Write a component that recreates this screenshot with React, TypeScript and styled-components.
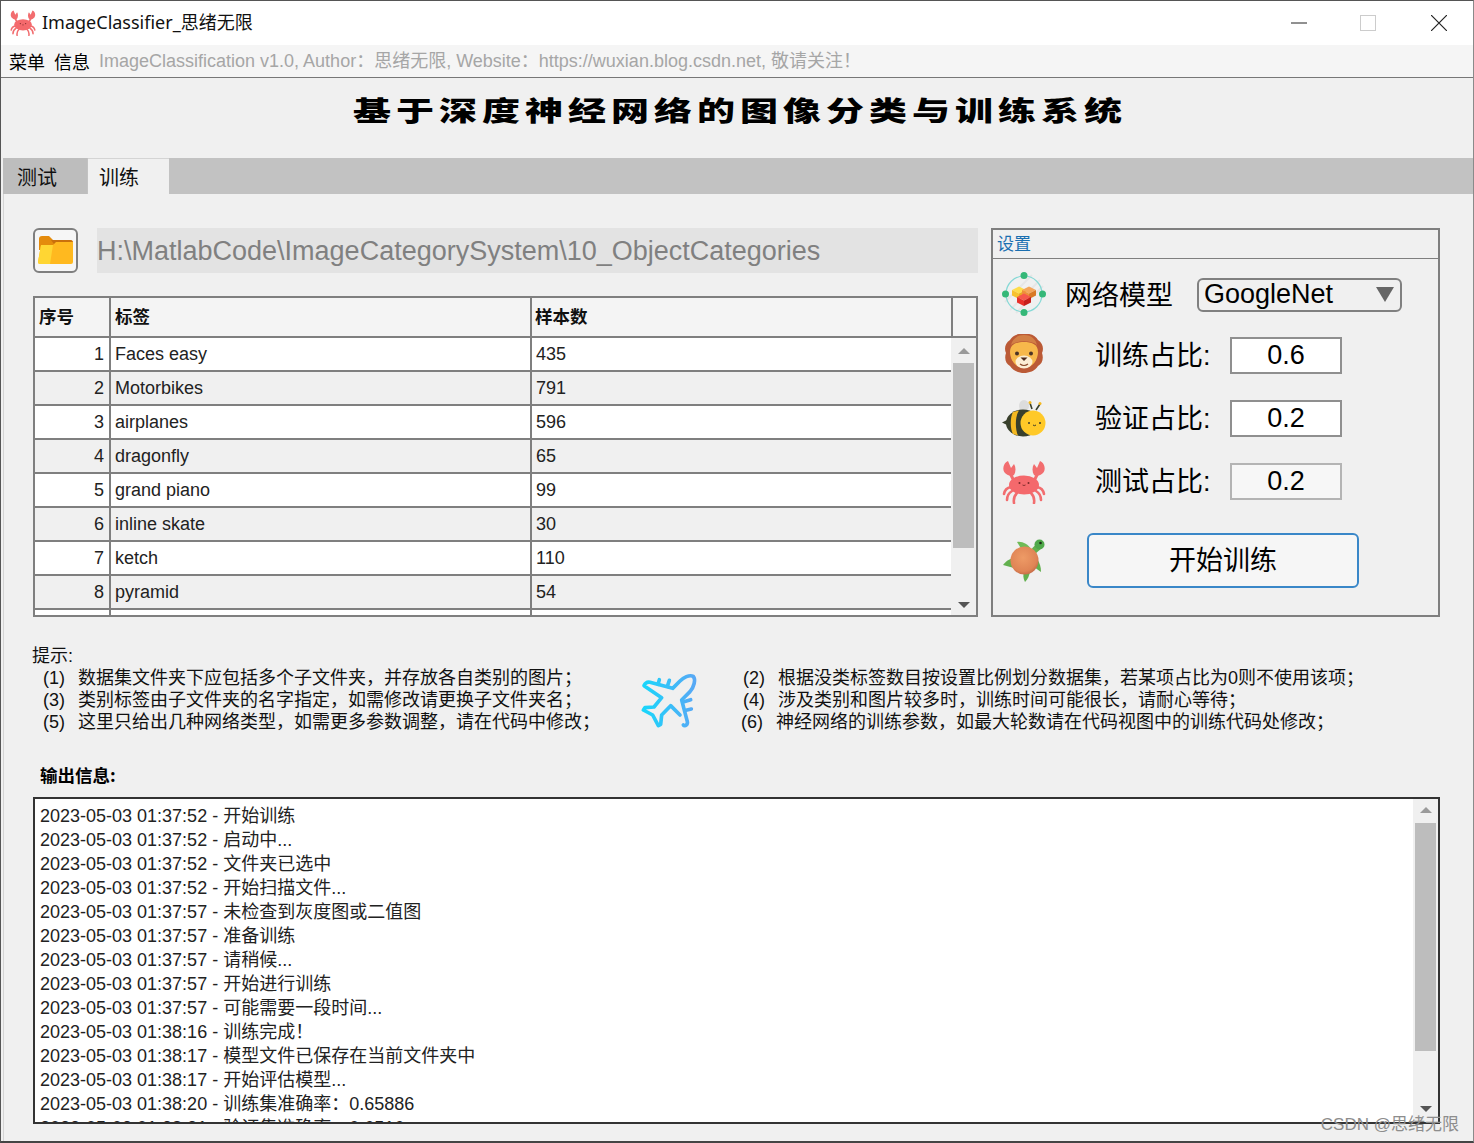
import React from 'react';
import styled, { createGlobalStyle } from 'styled-components';

const CJK = '"Noto Sans CJK SC", sans-serif';
const MIX = `"Liberation Sans", ${CJK}`;

const Global = createGlobalStyle`
  html, body { margin: 0; padding: 0; background: #f0f0f0; }
  * { box-sizing: border-box; }
`;

const Win = styled.div`
  position: relative;
  width: 1474px;
  height: 1143px;
  overflow: hidden;
  background: #f0f0f0;
  border-top: 1px solid #555;
  border-left: 1px solid #555;
  border-right: 1px solid #8a8a8a;
  border-bottom: 2px solid #444;
  font-family: ${MIX};
  color: #111;
`;
const TitleBar = styled.div`
  height: 44px;
  background: #fff;
  display: flex;
  align-items: center;
  padding-left: 9px;
`;
const TitleText = styled.div`
  margin-left: 6px;
  padding-bottom: 4px;
  font-family: "Noto Sans", ${CJK};
  font-size: 18px;
  color: #111;
`;
const Controls = styled.div`
  margin-left: auto;
  display: flex;
  height: 100%;
`;
const Ctl = styled.div`
  width: ${p => p.$w}px;
  display: flex;
  align-items: center;
  justify-content: center;
`;
const MenuBar = styled.div`
  height: 33px;
  background: #f5f5f5;
  border-bottom: 1px solid #777;
  display: flex;
  align-items: center;
  padding-left: 8px;
  font-size: 18px;
  line-height: 32px;
`;
const MenuItem = styled.span`
  margin-right: 9px;
  font-family: ${CJK};
  color: #000;
`;
const MenuInfo = styled.span`
  color: #a6a6a6;
`;
const Heading = styled.div`
  height: 80px;
  display: flex;
  align-items: center;
  justify-content: center;
  padding: 0 0 18px 6px;
`;
const HeadingText = styled.div`
  font-family: ${CJK};
  font-weight: 900;
  font-size: 38px;
  line-height: 40px;
  letter-spacing: 5px;
  color: #000;
  transform: scaleY(0.72);
  white-space: nowrap;
`;
const Tabs = styled.div`
  height: 36px;
  margin-left: 2px;
  background: #c2c2c2;
  display: flex;
`;
const Tab = styled.div`
  width: ${p => p.$w}px;
  margin-right: ${p => p.$gap}px;
  background: ${p => (p.$on ? '#f0f0f0' : '#bdbdbd')};
  box-shadow: ${p => (p.$on ? 'inset 0 1px 0 #d4d4d4' : 'none')};
  font-family: ${CJK};
  font-size: 20px;
  color: #111;
  padding-left: ${p => p.$pad}px;
  line-height: 37px;
`;
const Body = styled.div`
  height: 947px;
  padding: 34px 33px 0 32px;
  border-left: 1px solid #d4d4d4;
  margin-left: 2px;
`;
const Top = styled.div`
  display: flex;
  gap: 13px;
  align-items: flex-start;
  margin-left: -3px;
`;
const LeftCol = styled.div`
  width: 945px;
  flex: none;
`;
const PathRow = styled.div`
  display: flex;
  gap: 19px;
  height: 45px;
  margin-bottom: 23px;
`;
const FolderBtn = styled.div`
  width: 45px;
  height: 45px;
  border: 2px solid #7f7f7f;
  border-radius: 6px;
  background: #f6f6f6;
  display: flex;
  align-items: center;
  justify-content: center;
`;
const PathField = styled.div`
  flex: 1;
  background: #e3e3e3;
  color: #808080;
  font-size: 27px;
  line-height: 46px;
  white-space: nowrap;
`;
const TableBox = styled.div`
  height: 321px;
  border: 2px solid #7f7f7f;
  overflow: hidden;
`;
const THead = styled.div`
  display: grid;
  grid-template-columns: 76px 421px 421px 1fr;
  height: 40px;
  background: #f4f4f4;
  border-bottom: 2px solid #7f7f7f;
`;
const Th = styled.div`
  font-family: ${CJK};
  font-weight: 700;
  font-size: 17.5px;
  line-height: 36px;
  padding-left: ${p => p.$pad ?? 4}px;
  color: #111;
  border-right: ${p => (p.$end ? 'none' : '2px solid #7f7f7f')};
`;
const TBody = styled.div`
  display: flex;
`;
const Rows = styled.div`
  width: 916px;
  flex: none;
`;
const Row = styled.div`
  display: grid;
  grid-template-columns: 76px 421px 1fr;
  height: 34px;
  background: ${p => (p.$alt ? '#f0f0f0' : '#fff')};
  border-bottom: 2px solid #7f7f7f;
  font-size: 18px;
  line-height: 32px;
  color: #222;
`;
const IndexCell = styled.div`
  text-align: right;
  padding-right: 5px;
  border-right: 2px solid #7f7f7f;
`;
const LabelCell = styled.div`
  padding-left: 4px;
  border-right: 2px solid #7f7f7f;
`;
const CountCell = styled.div`
  padding-left: 4px;
`;
const VScroll = styled.div`
  flex: 1;
  height: 280px;
  position: relative;
  background: #f0f0f0;
  padding: 25px 2px 0 2px;
`;
const Thumb = styled.div`
  height: ${p => p.$h}px;
  background: #bdbdbd;
`;
const Arrow = styled.div`
  position: absolute;
  left: 50%;
  margin-left: -6px;
  ${p => (p.$down ? `bottom: ${p.$off}px` : `top: ${p.$off}px`)};
  width: 0;
  height: 0;
  border-left: 6px solid transparent;
  border-right: 6px solid transparent;
  ${p => (p.$down ? 'border-top: 6px solid #555' : 'border-bottom: 6px solid #9a9a9a')};
`;
const Panel = styled.div`
  width: 449px;
  height: 389px;
  flex: none;
  border: 2px solid #7f7f7f;
`;
const PanelTitle = styled.div`
  height: 29px;
  border-bottom: 1px solid #7f7f7f;
  padding-left: 4px;
  font-family: ${CJK};
  font-size: 17px;
  line-height: 25px;
  color: #1a6fb0;
`;
const PanelBody = styled.div`
  padding: 4px 0 0 9px;
`;
const SetRow = styled.div`
  display: flex;
  align-items: center;
  height: ${p => p.$h || 63}px;
  margin-top: ${p => p.$mt || 0}px;
`;
const SetIcon = styled.div`
  width: 44px;
  height: 44px;
  flex: none;
`;
const ModelLabel = styled.div`
  margin-left: 19px;
  width: 132px;
  font-family: ${CJK};
  font-size: 27px;
  color: #000;
`;
const Select = styled.div`
  position: relative;
  width: 205px;
  height: 34px;
  margin-top: 2px;
  border: 2px solid #808080;
  border-radius: 6px;
  font-size: 27px;
  line-height: 28px;
  padding-left: 5px;
  color: #000;
  background: #f0f0f0;
`;
const Caret = styled.div`
  position: absolute;
  right: 6px;
  top: 7px;
  width: 0;
  height: 0;
  border-left: 9.5px solid transparent;
  border-right: 9.5px solid transparent;
  border-top: 15px solid #666;
`;
const RatioLabel = styled.div`
  margin-left: 49px;
  width: 135px;
  padding-bottom: 5px;
  font-family: ${MIX};
  font-size: 27px;
  color: #000;
`;
const RatioBox = styled.div`
  width: 112px;
  height: 37px;
  border: 2px solid ${p => (p.$dim ? '#b4b4b4' : '#8f8f8f')};
  background: ${p => (p.$dim ? '#f7f7f7' : '#fff')};
  font-size: 27px;
  line-height: 33px;
  text-align: center;
  color: #000;
`;
const StartBtn = styled.div`
  margin-left: 41px;
  width: 272px;
  height: 55px;
  border: 2px solid #3a87c8;
  border-radius: 6px;
  background: #f6f6f6;
  font-family: ${CJK};
  font-size: 27px;
  line-height: 48px;
  text-align: center;
  color: #000;
`;
const Tips = styled.div`
  display: flex;
  margin: 26px 0 0 -4px;
  height: 118px;
  font-size: 18px;
  line-height: 22px;
  color: #111;
`;
const TipCol = styled.div`
  width: ${p => p.$w}px;
  padding-top: ${p => p.$top}px;
  flex: none;
`;
const TipHead = styled.div`
  font-family: ${MIX};
`;
const TipLine = styled.div`
  display: flex;
  white-space: nowrap;
  padding-left: ${p => p.$left}px;
`;
const TipNum = styled.span`
  width: 35px;
  flex: none;
`;
const TipText = styled.span`
  font-family: ${MIX};
`;
const PlaneBox = styled.div`
  width: 150px;
  padding: 22px 0 0 39px;
  flex: none;
`;
const OutLabel = styled.div`
  margin: 0 0 8px 4px;
  font-family: ${CJK};
  font-weight: 700;
  font-size: 17.5px;
  line-height: 28px;
  color: #000;
`;
const LogBox = styled.div`
  margin-left: -3px;
  width: 1407px;
  height: 327px;
  border: 2px solid #333;
  background: #fff;
  display: flex;
  overflow: hidden;
`;
const LogText = styled.div`
  flex: 1;
  padding: 5px 0 0 5px;
  overflow: hidden;
  font-size: 18px;
  line-height: 24px;
  color: #222;
  white-space: nowrap;
`;
const LogLine = styled.div`
  height: 24px;
`;
const LogMsg = styled.span`
  line-height: 1;
`;
const LogScroll = styled.div`
  width: 25px;
  flex: none;
  position: relative;
  background: #f0f0f0;
  padding: 24px 2px 0 2px;
`;
const Mark = styled.div`
  position: absolute;
  right: 14px;
  bottom: 5px;
  font-family: ${MIX};
  font-size: 17px;
  color: #8d8d8d;
  line-height: 22px;
`;

const Crab = ({ size = 44 }: { size?: number }) => (
  <svg width={size} height={size} viewBox="0 0 44 44" fill="none">
    <g stroke="#f26d6f" strokeWidth="2.6" strokeLinecap="round">
      <path d="M9 27 Q3 28 2 34" /><path d="M10 31 Q5 34 5 40" /><path d="M15 33 Q11 37 12 43" />
      <path d="M35 27 Q41 28 42 34" /><path d="M34 31 Q39 34 39 40" /><path d="M29 33 Q33 37 32 43" />
      <path d="M11 19 L8 13" strokeWidth="3" /><path d="M33 19 L36 13" strokeWidth="3" />
    </g>
    <path d="M6 1 C1 3 0 10 3 13 C5 15 9 17 12 15 C14 12 14 7 12 4 L9 8 Z" fill="#f26d6f" />
    <path d="M38 1 C43 3 44 10 41 13 C39 15 35 17 32 15 C30 12 30 7 32 4 L35 8 Z" fill="#f26d6f" />
    <ellipse cx="22" cy="25" rx="15" ry="9.5" fill="#f4696c" />
    <circle cx="17.5" cy="23" r="1" fill="#7a2a2a" /><circle cx="26.5" cy="23" r="1" fill="#7a2a2a" />
    <path d="M20.5 25 q1.5 1 3 0" stroke="#7a2a2a" strokeWidth="0.9" />
  </svg>
);
const Lion = () => (
  <svg width="44" height="44" viewBox="0 0 44 44">
    <path d="M22 0 C29 -1 34 2 36 6 C41 9 42 15 40 19 C42 25 40 30 36 32 C33 37 27 39 22 39 C17 39 11 37 8 32 C4 30 2 25 4 19 C2 15 3 9 8 6 C10 2 15 -1 22 0 Z" fill="#bb5a36" />
    <path d="M22 1 C14 1 10 6 9 11 C15 6 29 6 35 11 C34 6 30 1 22 1Z" fill="#d27f45" />
    <path d="M8 18 C8 10 15 8 22 8 C29 8 36 10 36 18 C36 25 31 34 22 34 C13 34 8 25 8 18 Z" fill="#f7b84b" />
    <ellipse cx="22" cy="28" rx="8.5" ry="6.5" fill="#fdeed4" />
    <circle cx="15" cy="19.5" r="2" fill="#4a3326" /><circle cx="29" cy="19.5" r="2" fill="#4a3326" />
    <path d="M18.5 23.5 h7 l-3.5 3.5 z" fill="#4d2a1d" />
    <path d="M18 30 q4 3 8 0" stroke="#8a4a2a" strokeWidth="1.2" fill="none" />
  </svg>
);
const Bee = () => (
  <svg width="44" height="44" viewBox="0 0 44 44">
    <ellipse cx="22" cy="9" rx="5" ry="6" fill="#dcdcdc" />
    <path d="M30 12 L28 6 M34 13 L38 7" stroke="#39402c" strokeWidth="1.6" />
    <circle cx="28" cy="5.5" r="1.5" fill="#f5b921" /><circle cx="38" cy="6.5" r="1.5" fill="#f5b921" />
    <path d="M5 23 L0 25.5 L5 28 Z" fill="#39402c" />
    <ellipse cx="21" cy="26" rx="17" ry="13.5" fill="#39402c" />
    <path d="M11 15 C8 20 8 32 11 37 L16 38.5 C13 32 13 19 17 13.5 Z" fill="#f5b921" />
    <circle cx="31" cy="26" r="12.5" fill="#ffc928" />
    <circle cx="27" cy="26" r="1" fill="#3b3b2b" /><circle cx="38" cy="26" r="1" fill="#3b3b2b" />
    <path d="M31 28 q1.5 1.4 3 0" stroke="#3b3b2b" strokeWidth="1" fill="none" />
  </svg>
);
const Turtle = () => (
  <svg width="44" height="44" viewBox="0 0 44 44">
    <defs>
      <radialGradient id="sh" cx="0.45" cy="0.4" r="0.65">
        <stop offset="0" stopColor="#ee9b66" />
        <stop offset="0.75" stopColor="#df8455" />
        <stop offset="1" stopColor="#bf6443" />
      </radialGradient>
    </defs>
    <path d="M29 11 C32 7 34 5 37 4 L40 9 L33 15 Z" fill="#62b04e" />
    <circle cx="37.5" cy="5.5" r="5" fill="#4fa84a" />
    <circle cx="38.5" cy="4" r="1.3" fill="#1c2c18" />
    <path d="M15 3 C20 2 26 5 29 10 L20 11 Z" fill="#6fbb57" />
    <path d="M1 26 C5 21 9 19 13 19 L12 29 Z" fill="#62b04e" />
    <path d="M23 43 C21 39 21 36 22 32 L28 33 C27 37 26 40 23 43 Z" fill="#62b04e" />
    <path d="M39 33 C39 28 38 24 35 20 L32 28 Z" fill="#62b04e" />
    <circle cx="22.5" cy="21.5" r="14" fill="url(#sh)" />
  </svg>
);
const Network = () => (
  <svg width="44" height="44" viewBox="0 0 44 44">
    <path d="M8 38 L38 8 M14 41 L41 14 M3 30 L30 3" stroke="#e6e6e6" strokeWidth="2" />
    <circle cx="22" cy="22" r="18" fill="none" stroke="#86d9d6" strokeWidth="1.2" />
    <circle cx="22" cy="3.5" r="3.5" fill="#35b878" /><circle cx="22" cy="40.5" r="3.5" fill="#35b878" />
    <circle cx="3.5" cy="22" r="3.5" fill="#35b878" /><circle cx="40.5" cy="22" r="3.5" fill="#35b878" />
    <path d="M10 18 L17 14.5 L24 18 L17 21.5 Z" fill="#ffdd4a" />
    <path d="M10 18 L17 21.5 V27 L10 23.5 Z" fill="#f7c22e" />
    <path d="M17 21.5 L24 18 V23.5 L17 27 Z" fill="#eaa91f" />
    <path d="M20 18 L27 14.5 L34 18 L27 21.5 Z" fill="#f5a55a" />
    <path d="M20 18 L27 21.5 V27 L20 23.5 Z" fill="#ee8e3a" />
    <path d="M27 21.5 L34 18 V23.5 L27 27 Z" fill="#d97a26" />
    <path d="M15 25 L22 21.5 L29 25 L22 28.5 Z" fill="#f6574b" />
    <path d="M15 25 L22 28.5 V34 L15 30.5 Z" fill="#e8302a" />
    <path d="M22 28.5 L29 25 V30.5 L22 34 Z" fill="#c71f1c" />
  </svg>
);
const Folder = () => (
  <svg width="38" height="34" viewBox="0 0 38 34">
    <path d="M2 5 Q2 2 5 2 H12 L16 6 H33 Q36 6 36 9 V16 H2 Z" fill="#e48b0c" />
    <path d="M14 6 H33 Q36 6 36 9 V10 H17 Z" fill="#c9700c" />
    <path d="M4 11 H16 L19 8 H36 V28 Q36 30 34 30 H3 Q1 30 1 28 Z" fill="#ffb91f" />
    <path d="M1 28 L4 11 H16 L13 30 H3 Q1 30 1 28Z" fill="#ffd633" />
  </svg>
);
const PlaneIcon = () => (
  <svg width="75" height="75" viewBox="0 0 225 225" fill="none">
    <defs>
      <linearGradient id="pl" x1="40" y1="0" x2="195" y2="0" gradientUnits="userSpaceOnUse">
        <stop offset="0" stopColor="#19d6fb" />
        <stop offset="1" stopColor="#58a8f5" />
      </linearGradient>
    </defs>
    <g stroke="url(#pl)" strokeWidth="11" strokeLinecap="round" strokeLinejoin="round">
      <path d="M160 180 C165 186 174 178 172 170 L155 105 L180 80 C192 66 198 44 190 34 C178 28 160 38 150 48 L128 70 L60 52 C52 50 46 54 42 62 L95 98 L72 126 L45 128 L40 135 L68 150 L85 182 L92 178 L95 150 L122 122 L150 150" />
      <path d="M88 44 L84 58 M118 46 L112 64 M182 104 L162 110 M184 132 L168 136" />
    </g>
  </svg>
);

const rows: [number, string, number][] = [
  [1, 'Faces easy', 435], [2, 'Motorbikes', 791], [3, 'airplanes', 596], [4, 'dragonfly', 65],
  [5, 'grand piano', 99], [6, 'inline skate', 30], [7, 'ketch', 110], [8, 'pyramid', 54], [9, '', 0],
];
const logs: [string, string][] = [
  ['2023-05-03 01:37:52', '开始训练'], ['2023-05-03 01:37:52', '启动中...'], ['2023-05-03 01:37:52', '文件夹已选中'],
  ['2023-05-03 01:37:52', '开始扫描文件...'], ['2023-05-03 01:37:57', '未检查到灰度图或二值图'], ['2023-05-03 01:37:57', '准备训练'],
  ['2023-05-03 01:37:57', '请稍候...'], ['2023-05-03 01:37:57', '开始进行训练'], ['2023-05-03 01:37:57', '可能需要一段时间...'],
  ['2023-05-03 01:38:16', '训练完成\uFF01'], ['2023-05-03 01:38:17', '模型文件已保存在当前文件夹中'], ['2023-05-03 01:38:17', '开始评估模型...'],
  ['2023-05-03 01:38:20', '训练集准确率\uFF1A0.65886'], ['2023-05-03 01:38:21', '验证集准确率\uFF1A0.6516'],
];
const tipsL = [
  ['(1)', '数据集文件夹下应包括多个子文件夹\uFF0C并存放各自类别的图片\uFF1B'],
  ['(3)', '类别标签由子文件夹的名字指定\uFF0C如需修改请更换子文件夹名\uFF1B'],
  ['(5)', '这里只给出几种网络类型\uFF0C如需更多参数调整\uFF0C请在代码中修改\uFF1B'],
];
const tipsR = [
  ['(2)', '根据没类标签数目按设置比例划分数据集\uFF0C若某项占比为0则不使用该项\uFF1B'],
  ['(4)', '涉及类别和图片较多时\uFF0C训练时间可能很长\uFF0C请耐心等待\uFF1B'],
  ['(6)', '神经网络的训练参数\uFF0C如最大轮数请在代码视图中的训练代码处修改\uFF1B'],
];
const ratios = [
  { icon: <Lion />, label: '训练占比:', value: '0.6', dim: false },
  { icon: <Bee />, label: '验证占比:', value: '0.2', dim: false },
  { icon: <Crab />, label: '测试占比:', value: '0.2', dim: true },
];

export default function App() {
  return (
    <Win>
      <Global />
      <TitleBar>
        <Crab size={26} />
        <TitleText>ImageClassifier_思绪无限</TitleText>
        <Controls>
          <Ctl $w={64}><svg width="16" height="16" viewBox="0 0 16 16"><path d="M0 8h16" stroke="#222" strokeWidth="1" /></svg></Ctl>
          <Ctl $w={74}><svg width="16" height="16" viewBox="0 0 16 16"><rect x="0.5" y="0.5" width="15" height="15" fill="none" stroke="#ccc" /></svg></Ctl>
          <Ctl $w={68}><svg width="16" height="16" viewBox="0 0 16 16"><path d="M0 0l16 16M16 0L0 16" stroke="#222" strokeWidth="1.2" /></svg></Ctl>
        </Controls>
      </TitleBar>
      <MenuBar>
        <MenuItem>菜单</MenuItem>
        <MenuItem>信息</MenuItem>
        <MenuInfo>{'ImageClassification v1.0, Author\uFF1A思绪无限, Website\uFF1Ahttps://wuxian.blog.csdn.net, 敬请关注\uFF01'}</MenuInfo>
      </MenuBar>
      <Heading><HeadingText>基于深度神经网络的图像分类与训练系统</HeadingText></Heading>
      <Tabs>
        <Tab $w={84} $gap={1} $pad={14}>测试</Tab>
        <Tab $w={81} $gap={0} $pad={11} $on>训练</Tab>
      </Tabs>
      <Body>
        <Top>
          <LeftCol>
            <PathRow>
              <FolderBtn><Folder /></FolderBtn>
              <PathField>H:\MatlabCode\ImageCategorySystem\10_ObjectCategories</PathField>
            </PathRow>
            <TableBox>
              <THead>
                <Th>序号</Th><Th>标签</Th><Th $pad={3}>样本数</Th><Th $end />
              </THead>
              <TBody>
                <Rows>
                  {rows.map(([i, l, n]) => (
                    <Row key={i} $alt={i % 2 === 0}>
                      <IndexCell>{i === 9 ? '' : i}</IndexCell>
                      <LabelCell>{l}</LabelCell>
                      <CountCell>{n || ''}</CountCell>
                    </Row>
                  ))}
                </Rows>
                <VScroll>
                  <Arrow $off={10} />
                  <Thumb $h={185} />
                  <Arrow $down $off={10} />
                </VScroll>
              </TBody>
            </TableBox>
          </LeftCol>
          <Panel>
            <PanelTitle>设置</PanelTitle>
            <PanelBody>
              <SetRow $h={61}>
                <SetIcon><Network /></SetIcon>
                <ModelLabel>网络模型</ModelLabel>
                <Select>GoogleNet<Caret /></Select>
              </SetRow>
              {ratios.map(r => (
                <SetRow key={r.label}>
                  <SetIcon>{r.icon}</SetIcon>
                  <RatioLabel>{r.label}</RatioLabel>
                  <RatioBox $dim={r.dim}>{r.value}</RatioBox>
                </SetRow>
              ))}
              <SetRow $mt={16}>
                <SetIcon><Turtle /></SetIcon>
                <StartBtn>开始训练</StartBtn>
              </SetRow>
            </PanelBody>
          </Panel>
        </Top>
        <Tips>
          <TipCol $w={559} $top={2}>
            <TipHead>提示:</TipHead>
            {tipsL.map(([n, t]) => (
              <TipLine key={n} $left={11}><TipNum>{n}</TipNum><TipText>{t}</TipText></TipLine>
            ))}
          </TipCol>
          <PlaneBox><PlaneIcon /></PlaneBox>
          <TipCol $w={640} $top={24}>
            {tipsR.map(([n, t]) => (
              <TipLine key={n} $left={n === '(6)' ? 0 : 2}><TipNum>{n}</TipNum><TipText>{t}</TipText></TipLine>
            ))}
          </TipCol>
        </Tips>
        <OutLabel>输出信息:</OutLabel>
        <LogBox>
          <LogText>
            {logs.map(([d, m], i) => (
              <LogLine key={i}>{d} - <LogMsg>{m}</LogMsg></LogLine>
            ))}
          </LogText>
          <LogScroll>
            <Arrow $off={8} />
            <Thumb $h={228} />
            <Arrow $down $off={10} />
          </LogScroll>
        </LogBox>
      </Body>
      <Mark>CSDN @思绪无限</Mark>
    </Win>
  );
}
